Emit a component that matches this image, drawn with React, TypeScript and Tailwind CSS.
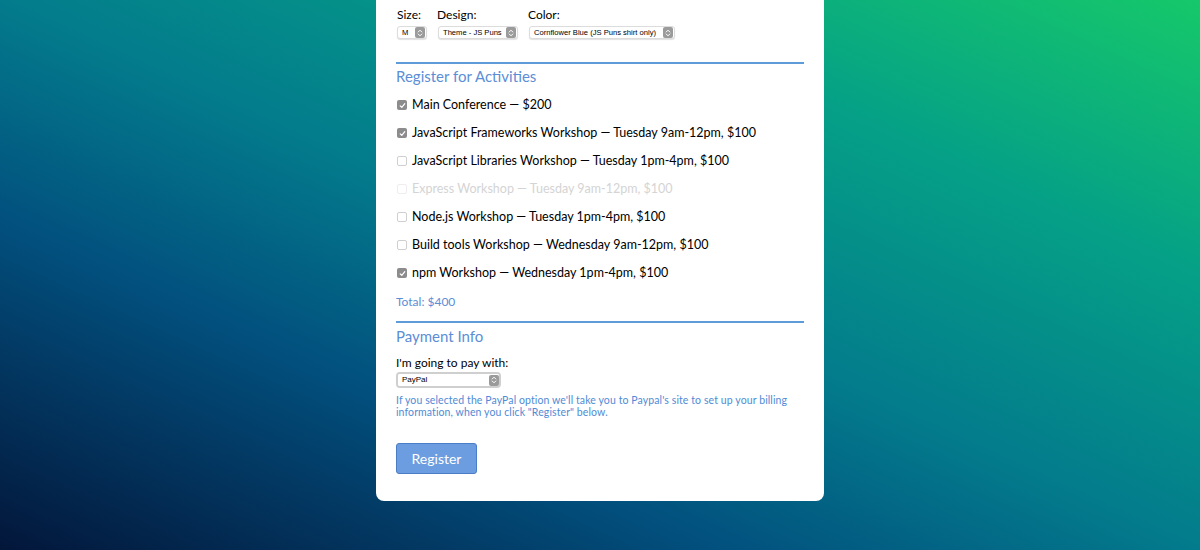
import React from "react"

type Activity = {
  label: string
  checked: boolean
  disabled?: boolean
}

const activities: Activity[] = [
  { label: "Main Conference — $200", checked: true },
  { label: "JavaScript Frameworks Workshop — Tuesday 9am-12pm, $100", checked: true },
  { label: "JavaScript Libraries Workshop — Tuesday 1pm-4pm, $100", checked: false },
  { label: "Express Workshop — Tuesday 9am-12pm, $100", checked: false, disabled: true },
  { label: "Node.js Workshop — Tuesday 1pm-4pm, $100", checked: false },
  { label: "Build tools Workshop — Wednesday 9am-12pm, $100", checked: false },
  { label: "npm Workshop — Wednesday 1pm-4pm, $100", checked: true },
]

function Stepper() {
  return (
    <span className="flex h-[11px] w-[10px] shrink-0 items-center justify-center rounded-[2px] bg-[#9b9b9b]">
      <svg width="6" height="8" viewBox="0 0 6 8" fill="none" stroke="white" strokeWidth="1" strokeLinecap="round" strokeLinejoin="round">
        <path d="M1.2 3 L3 1.2 L4.8 3" />
        <path d="M1.2 5 L3 6.8 L4.8 5" />
      </svg>
    </span>
  )
}

function MiniSelect({ value, width }: { value: string; width: string }) {
  return (
    <div
      className={`flex h-[13px] items-center justify-between rounded-[3px] border border-[#dcdcdc] bg-white pl-[4px] pr-px font-['Liberation_Sans',sans-serif] text-[7.6px] leading-none whitespace-nowrap text-black shadow-[0_1px_1px_rgba(0,0,0,0.12)] ${width}`}
    >
      <span>{value}</span>
      <Stepper />
    </div>
  )
}

function Checkbox({ checked, disabled }: { checked: boolean; disabled?: boolean }) {
  if (checked) {
    return (
      <span className="flex h-[10px] w-[10px] shrink-0 items-center justify-center rounded-[2px] bg-[#8c8c8c]">
        <svg width="7" height="7" viewBox="0 0 7 7" fill="none" stroke="white" strokeWidth="1.2" strokeLinecap="round" strokeLinejoin="round">
          <path d="M1.2 3.8 L2.8 5.4 L5.8 1.6" />
        </svg>
      </span>
    )
  }
  return (
    <span
      className={`h-[10px] w-[10px] shrink-0 rounded-[2px] border bg-white ${disabled ? "border-[#eeeeee]" : "border-[#cfcfcf]"}`}
    />
  )
}

export default function App() {
  return (
    <div className="min-h-[550px] overflow-hidden bg-[linear-gradient(to_top_right,#03163a_0%,#02507e_30%,#037b8c_50%,#05a087_75%,#16c86a_100%)] font-['Lato',sans-serif]">
      <div className="mx-auto w-[448px] rounded-b-[8px] bg-white px-5 pb-[27px] pt-[8px]">
        {/* T-shirt info */}
        <div className="flex">
          <div className="w-[41px]">
            <div className="h-[14px] pl-px text-[12px] leading-[14px] text-black">Size:</div>
            <div className="mt-[4px] pl-px">
              <MiniSelect value="M" width="w-[30px]" />
            </div>
          </div>
          <div className="w-[91px]">
            <div className="h-[14px] text-[12px] leading-[14px] text-black">Design:</div>
            <div className="mt-[4px] pl-px">
              <MiniSelect value="Theme - JS Puns" width="w-[80px]" />
            </div>
          </div>
          <div>
            <div className="h-[14px] text-[12px] leading-[14px] text-black">Color:</div>
            <div className="mt-[4px] pl-px">
              <MiniSelect value="Cornflower Blue (JS Puns shirt only)" width="w-[146px]" />
            </div>
          </div>
        </div>

        <div className="mt-[23px] h-[2px] bg-[#5d9bd9]" />

        {/* Activities */}
        <h2 className="mt-[3px] text-[15px] leading-[18px] text-[#5b8ed6]">Register for Activities</h2>
        <div className="mt-[6px] flex flex-col">
          {activities.map((a) => (
            <label
              key={a.label}
              className={`flex h-[28px] items-center gap-[5px] pl-px text-[12.5px] ${a.disabled ? "text-[#d4d4d4]" : "text-black"}`}
            >
              <Checkbox checked={a.checked} disabled={a.disabled} />
              <span>{a.label}</span>
            </label>
          ))}
        </div>
        <p className="mt-[8px] text-[12px] leading-[14px] text-[#5b8ed6]">Total: $400</p>

        <div className="mt-[12px] h-[2px] bg-[#5d9bd9]" />

        {/* Payment */}
        <h2 className="mt-[4px] text-[15px] leading-[18px] text-[#5b8ed6]">Payment Info</h2>
        <p className="mt-[11px] text-[12px] leading-[14px] text-black">I'm going to pay with:</p>
        <div className="mt-[2px] w-[105px] rounded-[4px] border-[2px] border-[#cfcfcf]">
          <div className="flex h-[12px] items-center justify-between rounded-[2px] bg-white pl-[4px] font-['Liberation_Sans',sans-serif] text-[8px] leading-none text-black">
            <span>PayPal</span>
            <Stepper />
          </div>
        </div>
        <p className="mt-[7px] text-[10.5px] leading-[11.5px] tracking-[0.1px] text-[#4f8bd6]">
          If you selected the PayPal option we'll take you to Paypal's site to set up your billing
          information, when you click "Register" below.
        </p>

        <button className="mt-[25px] flex h-[31px] w-[81px] items-center justify-center rounded-[3px] border border-[#4b7cc6] bg-[#6c9de0] text-[14px] text-white">
          Register
        </button>
      </div>
    </div>
  )
}
